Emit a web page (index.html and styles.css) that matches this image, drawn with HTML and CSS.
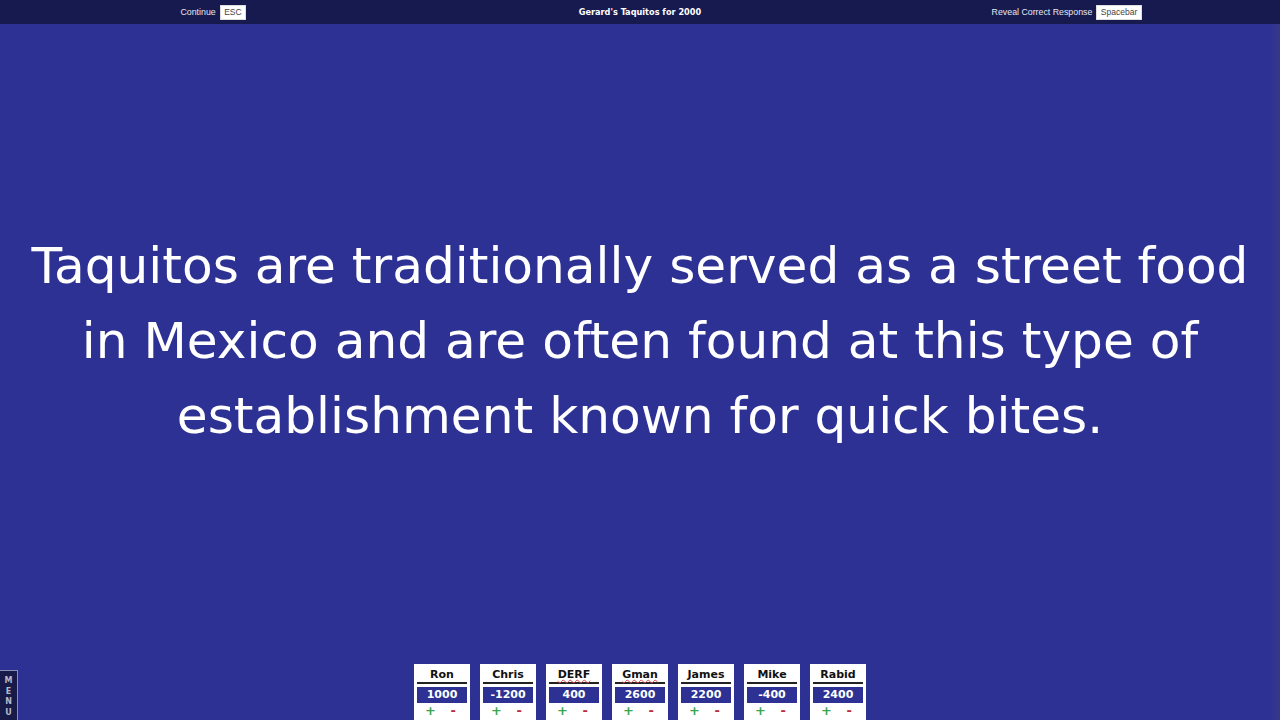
FILE: index.html
```html
<!DOCTYPE html>
<html>
<head>
<meta charset="utf-8">
<link rel="stylesheet" href="styles.css">
</head>
<body>
<div class="app">
  <header class="topbar">
    <div class="tb-cell"><span class="tb-label">Continue</span><span class="key">ESC</span></div>
    <div class="tb-cell tb-title">Gerard's Taquitos for 2000</div>
    <div class="tb-cell"><span class="tb-label">Reveal Correct Response</span><span class="key">Spacebar</span></div>
  </header>
  <main class="clue">
    <p class="clue-text">Taquitos are traditionally served as a street food in Mexico and are often found at this type of establishment known for quick bites.</p>
  </main>
  <footer class="players">
    <div class="card"><div class="name">Ron</div><div class="score">1000</div><div class="adj"><span class="plus">+</span><span class="minus">-</span></div></div>
    <div class="card"><div class="name">Chris</div><div class="score">-1200</div><div class="adj"><span class="plus">+</span><span class="minus">-</span></div></div>
    <div class="card"><div class="name"><span class="spell">DERF</span></div><div class="score">400</div><div class="adj"><span class="plus">+</span><span class="minus">-</span></div></div>
    <div class="card"><div class="name"><span class="spell">Gman</span></div><div class="score">2600</div><div class="adj"><span class="plus">+</span><span class="minus">-</span></div></div>
    <div class="card"><div class="name">James</div><div class="score">2200</div><div class="adj"><span class="plus">+</span><span class="minus">-</span></div></div>
    <div class="card"><div class="name">Mike</div><div class="score">-400</div><div class="adj"><span class="plus">+</span><span class="minus">-</span></div></div>
    <div class="card"><div class="name">Rabid</div><div class="score">2400</div><div class="adj"><span class="plus">+</span><span class="minus">-</span></div></div>
  </footer>
  <div class="menu-tab"><span>M</span><span>E</span><span>N</span><span>U</span></div>
  <div class="edge"></div>
</div>
</body>
</html>
```

FILE: styles.css
```css
* { box-sizing: border-box; }
html, body { margin: 0; padding: 0; }
body {
  width: 1280px;
  height: 720px;
  overflow: hidden;
  background: #2d3193;
  font-family: "DejaVu Sans", Verdana, sans-serif;
}
.app {
  position: relative;
  width: 1280px;
  height: 720px;
  display: flex;
  flex-direction: column;
}
.topbar {
  height: 24px;
  flex: 0 0 24px;
  background: #161a4f;
  display: grid;
  grid-template-columns: 1fr 1fr 1fr;
  align-items: center;
  color: #fff;
}
.tb-cell {
  display: flex;
  justify-content: center;
  align-items: center;
  gap: 4px;
}
.tb-label {
  font-family: "Liberation Sans", Arial, sans-serif;
  font-size: 8.8px;
  color: #e8e8f0;
}
.key {
  font-family: "Liberation Sans", Arial, sans-serif;
  font-size: 8.5px;
  background: #fff;
  color: #444;
  padding: 1px 3.5px;
  line-height: 11px;
  border: 1px solid #ddd;
}
.tb-title {
  font-family: "DejaVu Sans Condensed", "DejaVu Sans", Tahoma, sans-serif;
  font-weight: bold;
  font-size: 9.1px;
  color: #fff;
}
.clue {
  flex: 1;
  display: flex;
  align-items: center;
  justify-content: center;
  padding: 0 20px 8px;
}
.clue-text {
  margin: 0;
  text-align: center;
  color: #fff;
  font-size: 50.2px;
  line-height: 75px;
}
.players {
  flex: 0 0 56px;
  display: flex;
  justify-content: center;
  gap: 10px;
  align-items: flex-start;
}
.card {
  width: 56px;
  height: 56px;
  background: #fff;
  padding: 4px 3px 0;
  display: flex;
  flex-direction: column;
  align-items: stretch;
}
.name {
  font-weight: bold;
  font-size: 11px;
  line-height: 13px;
  text-align: center;
  color: #111;
  border-bottom: 2px solid #222;
  margin: 0 0 3px;
  padding-bottom: 1px;
}
.spell {
  text-decoration: underline wavy #d44;
  text-decoration-thickness: 1px;
  text-underline-offset: 1px;
}
.score {
  background: #2d3193;
  color: #fff;
  font-weight: bold;
  font-size: 11px;
  line-height: 16px;
  text-align: center;
}
.adj {
  display: flex;
  justify-content: space-between;
  padding: 1px 11px 0 8px;
  font-weight: bold;
  font-size: 13px;
  line-height: 14px;
}
.plus { color: #3aa84a; }
.minus { color: #c0283c; }
.menu-tab {
  position: absolute;
  left: 0;
  bottom: 0;
  width: 18px;
  height: 50px;
  background: #181b4a;
  border: 1px solid #8a8fb8;
  border-left: none;
  border-bottom: none;
  display: flex;
  flex-direction: column;
  align-items: center;
  justify-content: flex-start;
  padding-top: 5px;
  color: #b8b8c8;
  font-size: 8px;
  font-weight: bold;
  line-height: 10.5px;
}
.edge {
  position: absolute;
  right: 0;
  top: 24px;
  bottom: 0;
  width: 12px;
  background: linear-gradient(to right, rgba(60,60,110,0), rgba(70,70,120,0.35));
  pointer-events: none;
}
```
